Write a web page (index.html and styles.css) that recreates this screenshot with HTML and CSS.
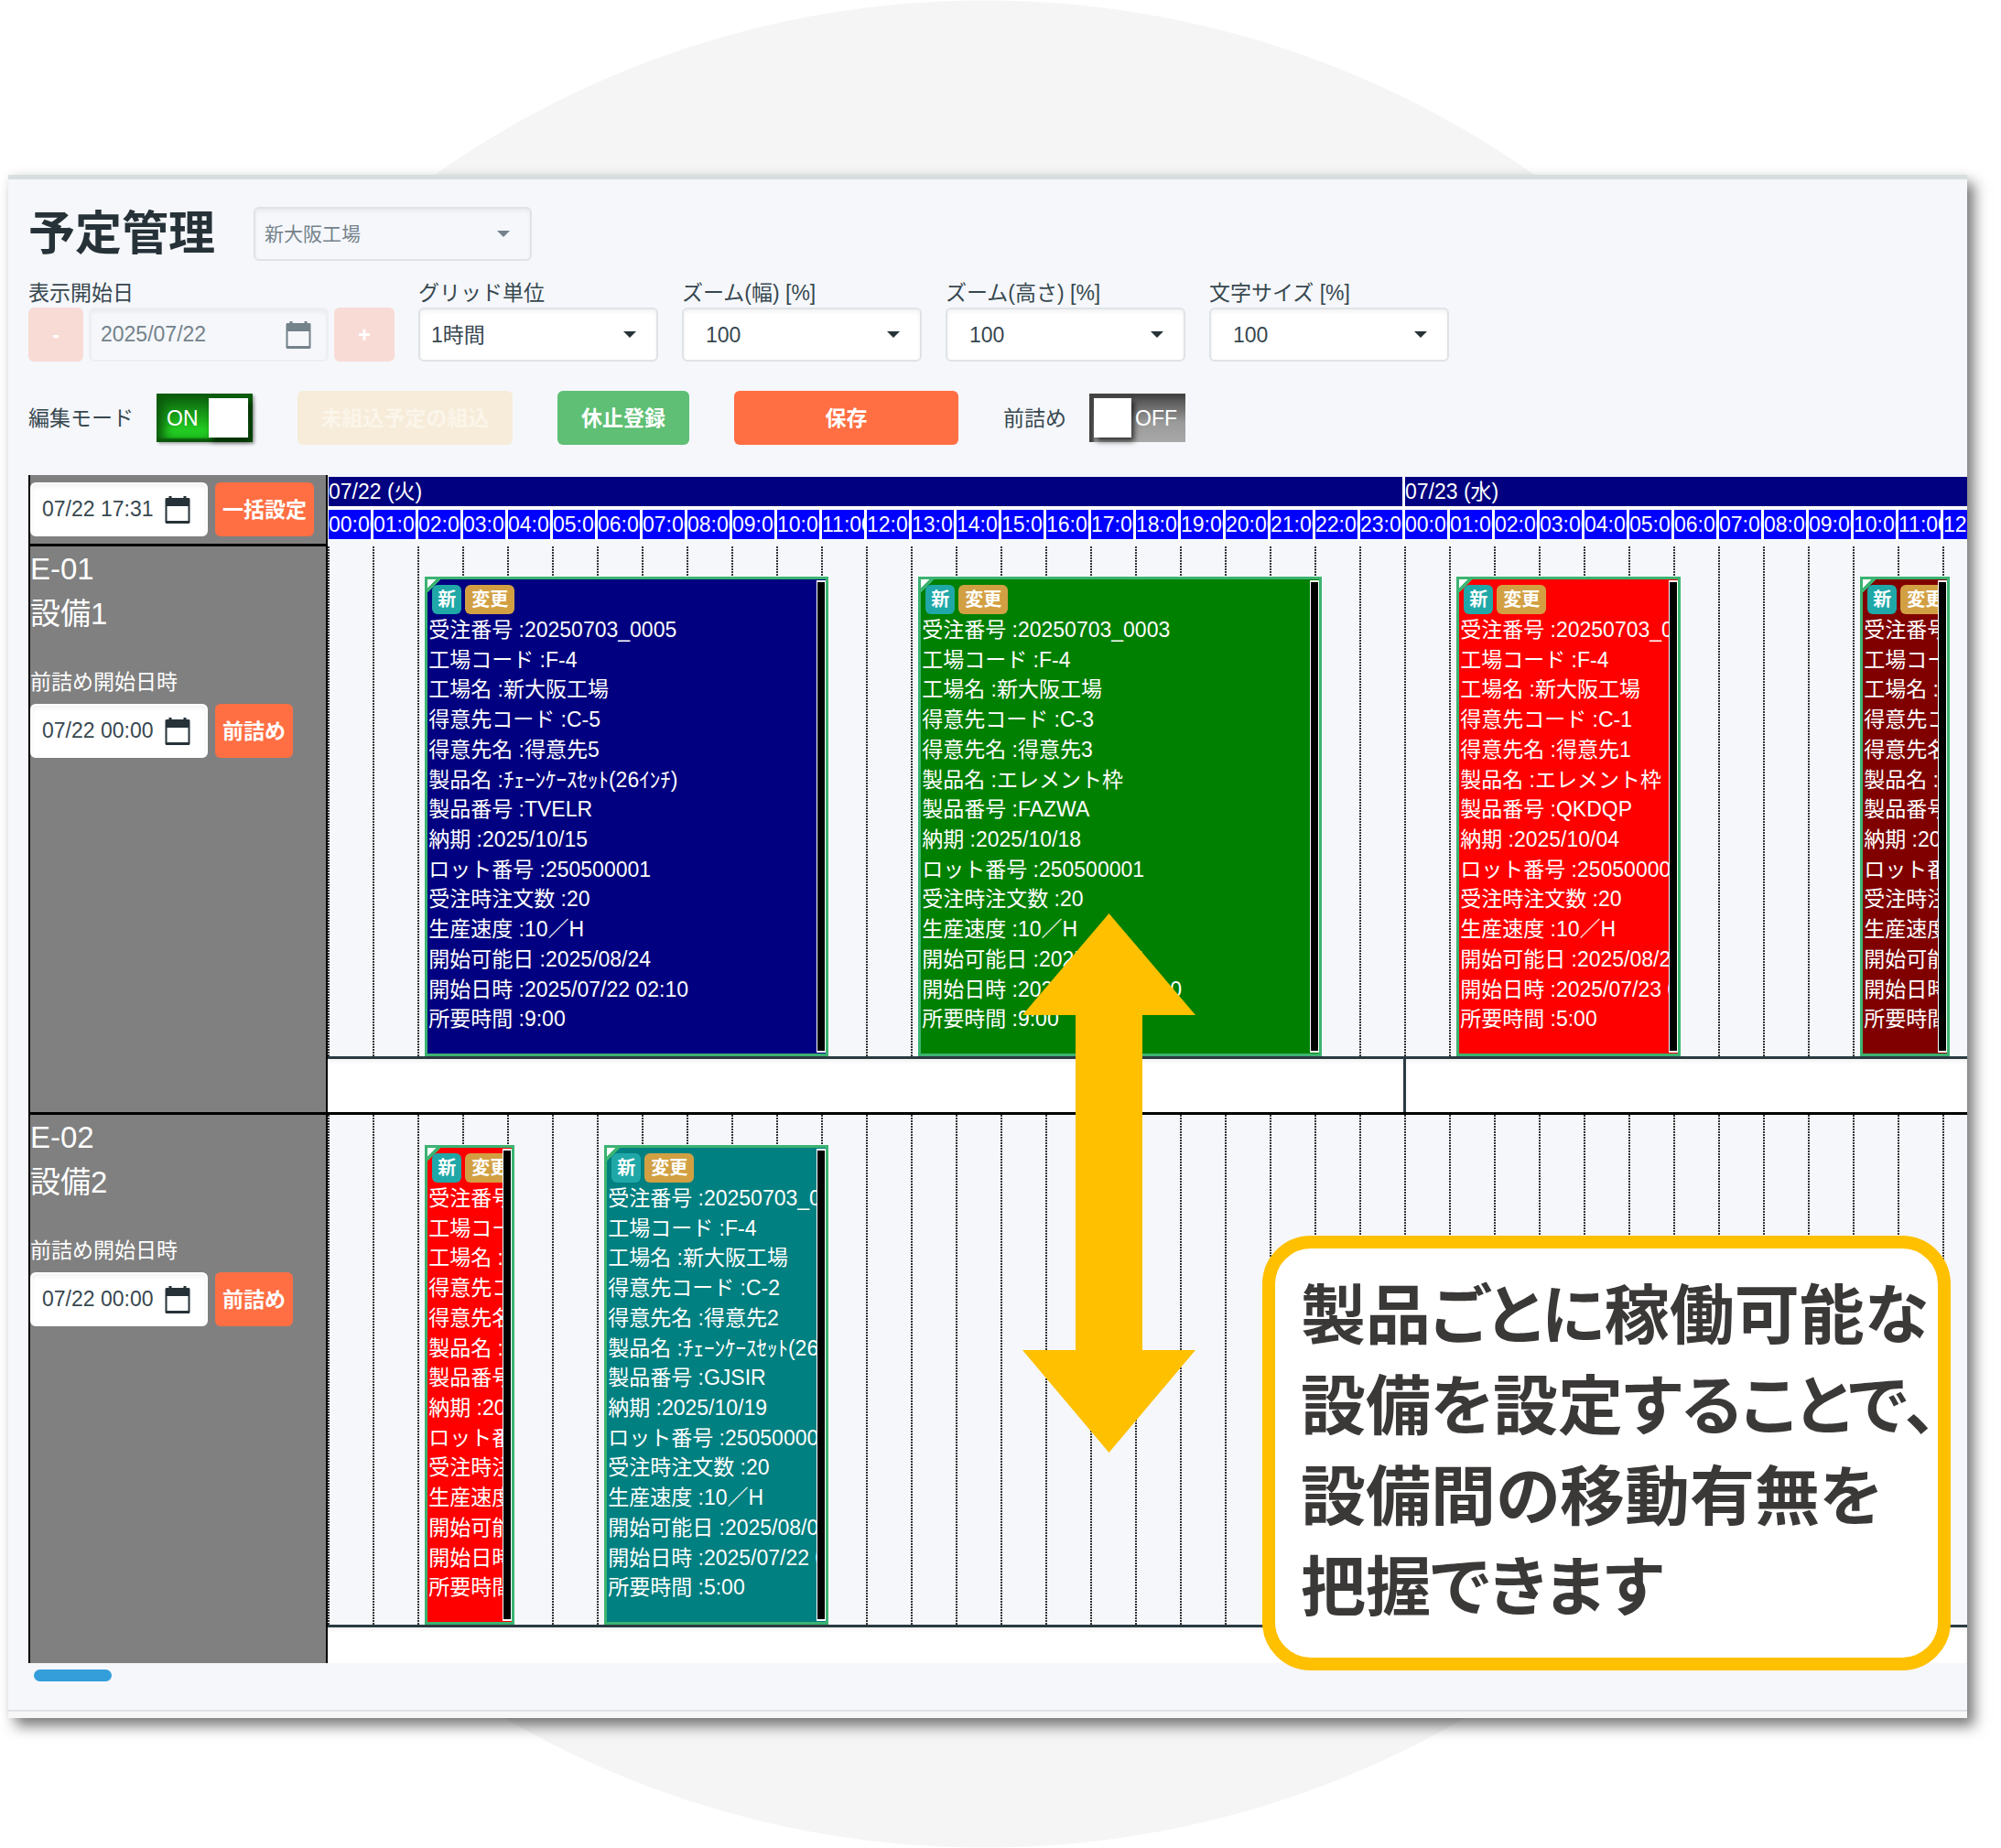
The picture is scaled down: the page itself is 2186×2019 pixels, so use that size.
FILE: index.html
```html
<!DOCTYPE html>
<html lang="ja">
<head>
<meta charset="utf-8">
<meta name="viewport" content="width=device-width, initial-scale=1">
<title>予定管理</title>
<link rel="stylesheet" href="styles.css">
</head>
<body>
<svg class="defs" width="0" height="0" aria-hidden="true">
  <symbol id="calendar" viewBox="0 0 27 30">
    <path fill="currentColor" fill-rule="evenodd" d="M4 0h3v2h13V0h3v2h3l1 1v26l-1 1H1l-1-1V3l1-1h3zM2 11v16h23V11z"/>
  </symbol>
</svg>
<main class="stage">
  <section class="panel">
    <header class="row row--title">
      <h1 class="title">予定管理</h1>
      <span class="select select--factory is-disabled">
        <select aria-label="工場" disabled><option>新大阪工場</option></select>
      </span>
    </header>

    <form class="row row--fields">
      <div class="field">
        <label class="label" for="start">表示開始日</label>
        <div class="stepper">
          <button type="button" class="btn btn--step" disabled>-</button>
          <span class="date date--wide is-disabled">
            <input id="start" type="text" value="2025/07/22" disabled>
            <svg class="date__icon"><use href="#calendar"/></svg>
          </span>
          <button type="button" class="btn btn--step btn--plus" disabled>+</button>
        </div>
      </div>
      <div class="field">
        <label class="label" for="grid">グリッド単位</label>
        <span class="select"><select id="grid"><option>1時間</option></select></span>
      </div>
      <div class="field">
        <label class="label" for="zoomw">ズーム(幅) [%]</label>
        <span class="select select--number"><select id="zoomw"><option>100</option></select></span>
      </div>
      <div class="field">
        <label class="label" for="zoomh">ズーム(高さ) [%]</label>
        <span class="select select--number"><select id="zoomh"><option>100</option></select></span>
      </div>
      <div class="field">
        <label class="label" for="fsize">文字サイズ [%]</label>
        <span class="select select--number"><select id="fsize"><option>100</option></select></span>
      </div>
    </form>

    <div class="row row--actions">
      <label class="label" for="edit">編集モード</label>
      <label class="toggle toggle--on"><span>ON</span><input id="edit" type="checkbox" checked></label>
      <button type="button" class="btn btn--import" disabled>未組込予定の組込</button>
      <button type="button" class="btn btn--pause">休止登録</button>
      <button type="button" class="btn btn--save">保存</button>
      <label class="label label--pack" for="pack">前詰め</label>
      <label class="toggle toggle--off"><input id="pack" type="checkbox"><span>OFF</span></label>
    </div>

    <div class="board">
      <div class="view">
        <div class="line line--head">
          <div class="side side--head">
            <div class="pair">
              <span class="date">
                <input type="text" value="07/22 17:31" aria-label="一括設定日時">
                <svg class="date__icon"><use href="#calendar"/></svg>
              </span>
              <button type="button" class="btn">一括設定</button>
            </div>
          </div>
          <div class="scale">
            <div class="days"><div class="day">07/22 (火)</div><div class="day">07/23 (水)</div></div>
            <div class="hours">
              <span>00:00</span><span>01:00</span><span>02:00</span><span>03:00</span><span>04:00</span><span>05:00</span><span>06:00</span><span>07:00</span><span>08:00</span><span>09:00</span><span>10:00</span><span>11:00</span><span>12:00</span><span>13:00</span><span>14:00</span><span>15:00</span><span>16:00</span><span>17:00</span><span>18:00</span><span>19:00</span><span>20:00</span><span>21:00</span><span>22:00</span><span>23:00</span><span>00:00</span><span>01:00</span><span>02:00</span><span>03:00</span><span>04:00</span><span>05:00</span><span>06:00</span><span>07:00</span><span>08:00</span><span>09:00</span><span>10:00</span><span>11:00</span><span>12:00</span>
            </div>
          </div>
        </div>

        <div class="line">
          <div class="side">
            <div class="machine">E-01</div>
            <div class="machine">設備1</div>
            <label class="side__label" for="pack1">前詰め開始日時</label>
            <div class="pair">
              <span class="date">
                <input id="pack1" type="text" value="07/22 00:00">
                <svg class="date__icon"><use href="#calendar"/></svg>
              </span>
              <button type="button" class="btn">前詰め</button>
            </div>
          </div>
          <div class="lane">
            <div class="track">
              <article class="job job--navy" style="--start:130;--length:540">
                <div class="job__body">
                  <div class="badges"><span class="badge badge--new">新</span><span class="badge badge--edit">変更</span></div>
                  <ul class="facts">
                    <li>受注番号 :20250703_0005</li><li>工場コード :F-4</li><li>工場名 :新大阪工場</li><li>得意先コード :C-5</li><li>得意先名 :得意先5</li><li>製品名 :ﾁｪｰﾝｹｰｽｾｯﾄ(26ｲﾝﾁ)</li><li>製品番号 :TVELR</li><li>納期 :2025/10/15</li><li>ロット番号 :250500001</li><li>受注時注文数 :20</li><li>生産速度 :10／H</li><li>開始可能日 :2025/08/24</li><li>開始日時 :2025/07/22 02:10</li><li>所要時間 :9:00</li>
                  </ul>
                </div>
                <span class="job__grip"></span>
              </article>
              <article class="job job--green" style="--start:790;--length:540">
                <div class="job__body">
                  <div class="badges"><span class="badge badge--new">新</span><span class="badge badge--edit">変更</span></div>
                  <ul class="facts">
                    <li>受注番号 :20250703_0003</li><li>工場コード :F-4</li><li>工場名 :新大阪工場</li><li>得意先コード :C-3</li><li>得意先名 :得意先3</li><li>製品名 :エレメント枠</li><li>製品番号 :FAZWA</li><li>納期 :2025/10/18</li><li>ロット番号 :250500001</li><li>受注時注文数 :20</li><li>生産速度 :10／H</li><li>開始可能日 :2025/08/24</li><li>開始日時 :2025/07/22 13:10</li><li>所要時間 :9:00</li>
                  </ul>
                </div>
                <span class="job__grip"></span>
              </article>
              <article class="job job--red" style="--start:1510;--length:300">
                <div class="job__body">
                  <div class="badges"><span class="badge badge--new">新</span><span class="badge badge--edit">変更</span></div>
                  <ul class="facts">
                    <li>受注番号 :20250703_0001</li><li>工場コード :F-4</li><li>工場名 :新大阪工場</li><li>得意先コード :C-1</li><li>得意先名 :得意先1</li><li>製品名 :エレメント枠</li><li>製品番号 :QKDQP</li><li>納期 :2025/10/04</li><li>ロット番号 :250500001</li><li>受注時注文数 :20</li><li>生産速度 :10／H</li><li>開始可能日 :2025/08/24</li><li>開始日時 :2025/07/23 01:10</li><li>所要時間 :5:00</li>
                  </ul>
                </div>
                <span class="job__grip"></span>
              </article>
              <article class="job job--maroon" style="--start:2050;--length:120">
                <div class="job__body">
                  <div class="badges"><span class="badge badge--new">新</span><span class="badge badge--edit">変更</span></div>
                  <ul class="facts">
                    <li>受注番号 :20250703_0004</li><li>工場コード :F-4</li><li>工場名 :新大阪工場</li><li>得意先コード :C-4</li><li>得意先名 :得意先4</li><li>製品名 :エレメント枠</li><li>製品番号 :KLMRS</li><li>納期 :2025/10/20</li><li>ロット番号 :250500001</li><li>受注時注文数 :20</li><li>生産速度 :10／H</li><li>開始可能日 :2025/08/24</li><li>開始日時 :2025/07/23 10:10</li><li>所要時間 :2:00</li>
                  </ul>
                </div>
                <span class="job__grip"></span>
              </article>
            </div>
            <div class="notes">
              <input type="text" aria-label="E-01 07/22 メモ"><input type="text" aria-label="E-01 07/23 メモ">
            </div>
          </div>
        </div>

        <div class="line">
          <div class="side">
            <div class="machine">E-02</div>
            <div class="machine">設備2</div>
            <label class="side__label" for="pack2">前詰め開始日時</label>
            <div class="pair">
              <span class="date">
                <input id="pack2" type="text" value="07/22 00:00">
                <svg class="date__icon"><use href="#calendar"/></svg>
              </span>
              <button type="button" class="btn">前詰め</button>
            </div>
          </div>
          <div class="lane">
            <div class="track">
              <article class="job job--red" style="--start:130;--length:120">
                <div class="job__body">
                  <div class="badges"><span class="badge badge--new">新</span><span class="badge badge--edit">変更</span></div>
                  <ul class="facts">
                    <li>受注番号 :20250703_0006</li><li>工場コード :F-4</li><li>工場名 :新大阪工場</li><li>得意先コード :C-1</li><li>得意先名 :得意先1</li><li>製品名 :エレメント枠</li><li>製品番号 :QKDQP</li><li>納期 :2025/10/12</li><li>ロット番号 :250500001</li><li>受注時注文数 :20</li><li>生産速度 :10／H</li><li>開始可能日 :2025/08/24</li><li>開始日時 :2025/07/22 02:10</li><li>所要時間 :2:00</li>
                  </ul>
                </div>
                <span class="job__grip"></span>
              </article>
              <article class="job job--teal" style="--start:370;--length:300">
                <div class="job__body">
                  <div class="badges"><span class="badge badge--new">新</span><span class="badge badge--edit">変更</span></div>
                  <ul class="facts">
                    <li>受注番号 :20250703_0002</li><li>工場コード :F-4</li><li>工場名 :新大阪工場</li><li>得意先コード :C-2</li><li>得意先名 :得意先2</li><li>製品名 :ﾁｪｰﾝｹｰｽｾｯﾄ(26ｲﾝﾁ)</li><li>製品番号 :GJSIR</li><li>納期 :2025/10/19</li><li>ロット番号 :250500001</li><li>受注時注文数 :20</li><li>生産速度 :10／H</li><li>開始可能日 :2025/08/04</li><li>開始日時 :2025/07/22 06:10</li><li>所要時間 :5:00</li>
                  </ul>
                </div>
                <span class="job__grip"></span>
              </article>
            </div>
            <div class="notes">
              <input type="text" aria-label="E-02 07/22 メモ"><input type="text" aria-label="E-02 07/23 メモ">
            </div>
          </div>
        </div>
      </div>
      <div class="thumb"></div>

      <svg class="arrow" viewBox="0 0 189 589" aria-hidden="true">
        <path fill="#ffc000" d="M94.5 0 189 111H131V477H189L94.5 589 0 477H58V111H0z"/>
      </svg>
      <p class="callout">製品ごとに稼働可能な<br>設備を設定することで、<br>設備間の移動有無を<br>把握できます</p>
    </div>
  </section>
</main>
</body>
</html>
```
FILE: styles.css
```css
* { box-sizing: border-box; }

:root {
  --hour: 49px;
  --orange: #ff6f43;
  --ink: #263238;
  --surface: #f5f7fb;
}

body {
  margin: 0;
  background: #fff;
  color: #37474f;
  font: 23px/32px "Liberation Sans", "Noto Sans CJK JP", sans-serif;
}

input, select, button { font: inherit; color: inherit; margin: 0; }

.defs { position: absolute; }

.stage {
  min-height: 100vh;
  padding: 191px 37px 142px 9px;
  background: radial-gradient(ellipse 47% 50% at 49.2% 50%, #f5f5f5 99.9%, #fff 100%);
}

.panel {
  padding: 30px 0 33px 22px;
  border-top: 5px solid #d8dede;
  border-bottom: 7px solid #f7f7f7;
  background: var(--surface);
  box-shadow: inset 0 -2px #dfe2e5, 8px 9px 14px rgba(0, 0, 0, .5), 0 0 10px rgba(0, 0, 0, .06);
}

.row { display: flex; align-items: center; }
.row--title { gap: 42px; height: 59px; }
.row--fields { gap: 26px; margin-top: 19px; }
.row--actions { margin-top: 32px; height: 59px; }

.title {
  margin: 0;
  color: var(--ink);
  font-size: 51px;
  line-height: 57px;
  font-weight: 700;
}

.label { display: block; white-space: nowrap; }
.stepper { display: flex; gap: 6px; }

/* controls */
.select { position: relative; display: block; width: 262px; }
.select::after {
  content: "";
  position: absolute;
  right: 24px;
  top: 26px;
  border: 7px solid transparent;
  border-top-color: var(--ink);
  border-bottom: 0;
  pointer-events: none;
}
.select select {
  appearance: none;
  display: block;
  width: 100%;
  height: 59px;
  padding: 0 12px;
  border: 2px solid #dfe3e6;
  border-radius: 6px;
  background: #fff;
  box-shadow: inset 0 3px 4px rgba(0, 0, 0, .05);
}
.select--factory { width: 304px; }
.select--factory select { padding: 0 10px; font-size: 21px; }
.select--number select { padding: 0 24px; }
.select.is-disabled::after { border-top-color: #74828a; }
.select.is-disabled select { background: var(--surface); color: #74828a; opacity: 1; }

.date { position: relative; display: block; width: 194px; }
.date--wide { width: 262px; }
.date input {
  display: block;
  width: 100%;
  height: 59px;
  padding: 0 11px;
  border: 2px solid #eceff1;
  border-radius: 6px;
  background: #fff;
  box-shadow: inset 0 3px 4px rgba(0, 0, 0, .05);
}
.date.is-disabled input { background: var(--surface); color: #74828a; }
.date__icon {
  position: absolute;
  right: 19px;
  top: 15px;
  width: 28px;
  height: 30px;
  color: var(--ink);
  pointer-events: none;
}
.is-disabled .date__icon { color: #74828a; }

.btn {
  height: 59px;
  padding: 0 8px;
  border: 0;
  border-radius: 6px;
  background: var(--orange);
  color: #fff;
  font-weight: 700;
  white-space: nowrap;
}
.btn--step { width: 60px; background: #f9dbd5; }
.btn--plus { width: 66px; }
.btn--import { width: 235px; margin-left: 49px; background: #f7ecd9; color: #fbf5ea; }
.btn--pause { width: 144px; margin-left: 49px; background: #5fbf75; }
.btn--save { width: 245px; margin-left: 49px; }
.label--pack { margin-left: 49px; }

.toggle {
  display: flex;
  align-items: center;
  justify-content: space-between;
  width: 105px;
  height: 53px;
  padding: 0 5px;
  margin-left: 25px;
  color: #fff;
}
.toggle span { padding: 0 6px; }
.toggle input {
  appearance: none;
  width: 43px;
  height: 43px;
  background: #fff;
  box-shadow: 3px 4px 6px rgba(0, 0, 0, .7);
}
.toggle--on {
  background: linear-gradient(#0b5a0b, #22cc22 75%);
  box-shadow: inset 8px 0 12px #0b5a0b, inset -4px -4px 2px #0b5a0b, 2px 2px 3px rgba(0, 0, 0, .3);
}
.toggle--off { background: linear-gradient(#444, #9a9a9a 60%, #a8a8a8); box-shadow: inset 5px 4px 3px #444; }
.toggle--off span { padding: 0 4px; }

/* schedule board */
.board { position: relative; margin-top: 33px; }
.view { height: 1298px; overflow: hidden; }

.line { display: grid; grid-template-columns: 327px minmax(0, 1fr); height: 621px; }
.line--head { height: 78px; }

.side {
  border: solid #000;
  border-width: 0 2px 3px;
  background: #808080;
  color: #fff;
}
.side--head { padding-top: 8px; }
.side .date, .side input { color: #37474f; }
.side .date input { border-color: #fff; }
.side__label { display: block; margin: 34px 0 8px; }
.machine { font-size: 33px; line-height: 49px; }
.pair { display: flex; gap: 8px; }

.scale { padding: 2px 0 0 1px; overflow: hidden; color: #fff; white-space: nowrap; }
.days, .hours { display: flex; background: #fff; }
.day { flex: 1; height: 32px; background: #000080; }
.day:first-child { flex: none; width: calc(24 * var(--hour)); border-right: 3px solid #fff; }
.hours { padding: 4px 0 1px; }
.hours span {
  flex: none;
  width: var(--hour);
  height: 32px;
  border-right: 3px solid #fff;
  background: #00f;
  overflow: hidden;
}

.lane { display: flex; flex-direction: column; border-bottom: 3px solid #000; overflow: hidden; }
.track {
  position: relative;
  height: 557px;
  background: conic-gradient(at 2px 2px, transparent 270deg, #333 0) 0 0 / var(--hour) 3px;
}
.notes { display: flex; flex: 1; border-top: 3px solid #2b3a42; background: #fff; }
.notes input {
  flex: 1;
  min-width: 0;
  padding: 0 12px;
  border: 0;
  border-radius: 0;
  background: #fff;
  box-shadow: inset 0 3px 4px rgba(0, 0, 0, .05);
}
.notes input:first-child {
  flex: none;
  width: calc(24 * var(--hour) + 2px);
  border-right: 3px solid #2b3a42;
}

.job {
  position: absolute;
  left: calc(var(--start) * var(--hour) / 60);
  bottom: 0;
  width: calc(var(--length) * var(--hour) / 60);
  height: 524px;
  display: flex;
  border: 3px solid #3cb371;
  color: #fff;
  white-space: nowrap;
}
.job::before {
  content: "";
  position: absolute;
  width: 16px;
  height: 16px;
  background: linear-gradient(135deg, #fff 7px, #3cb371 7px 10px, transparent 10px);
}
.job--navy { background: #000080; }
.job--green { background: #008000; }
.job--red { background: #f00; }
.job--maroon { background: #800000; }
.job--teal { background: #008080; }

.job__body { position: relative; flex: 1; min-width: 0; padding-top: 6px; overflow: hidden; }
.job__grip { width: 10px; margin: 1px 0; border: 1px solid #fff; border-width: 2px 1px; background: #000; }

.badges { display: flex; gap: 4px; padding: 0 0 1px 5px; }
.badge { padding: 0 6px; border-radius: 6px; font-size: 20px; font-weight: 700; }
.badge--new { background: #20a8a8; }
.badge--edit { padding: 0 7px; background: #d2a043; }

.facts {
  display: grid;
  grid-template-rows: repeat(14, 1fr);
  height: 458px;
  margin: 0;
  padding: 0 0 0 1px;
  list-style: none;
}

.thumb { width: 85px; height: 13px; margin: 7px 0 0 6px; border-radius: 7px; background: #349edb; }

/* annotation over the board */
.arrow { position: absolute; left: 1086px; top: 479px; width: 189px; height: 589px; }
.callout {
  position: absolute;
  right: 18px;
  top: 831px;
  width: 752px;
  margin: 0;
  padding: 18px 0 33px 28px;
  border: 14px solid #ffc000;
  border-radius: 53px;
  background: #fff;
  color: #3b3838;
  font: 700 71px/99px "Noto Sans CJK JP", sans-serif;
  font-feature-settings: "palt";
  white-space: nowrap;
}
```
